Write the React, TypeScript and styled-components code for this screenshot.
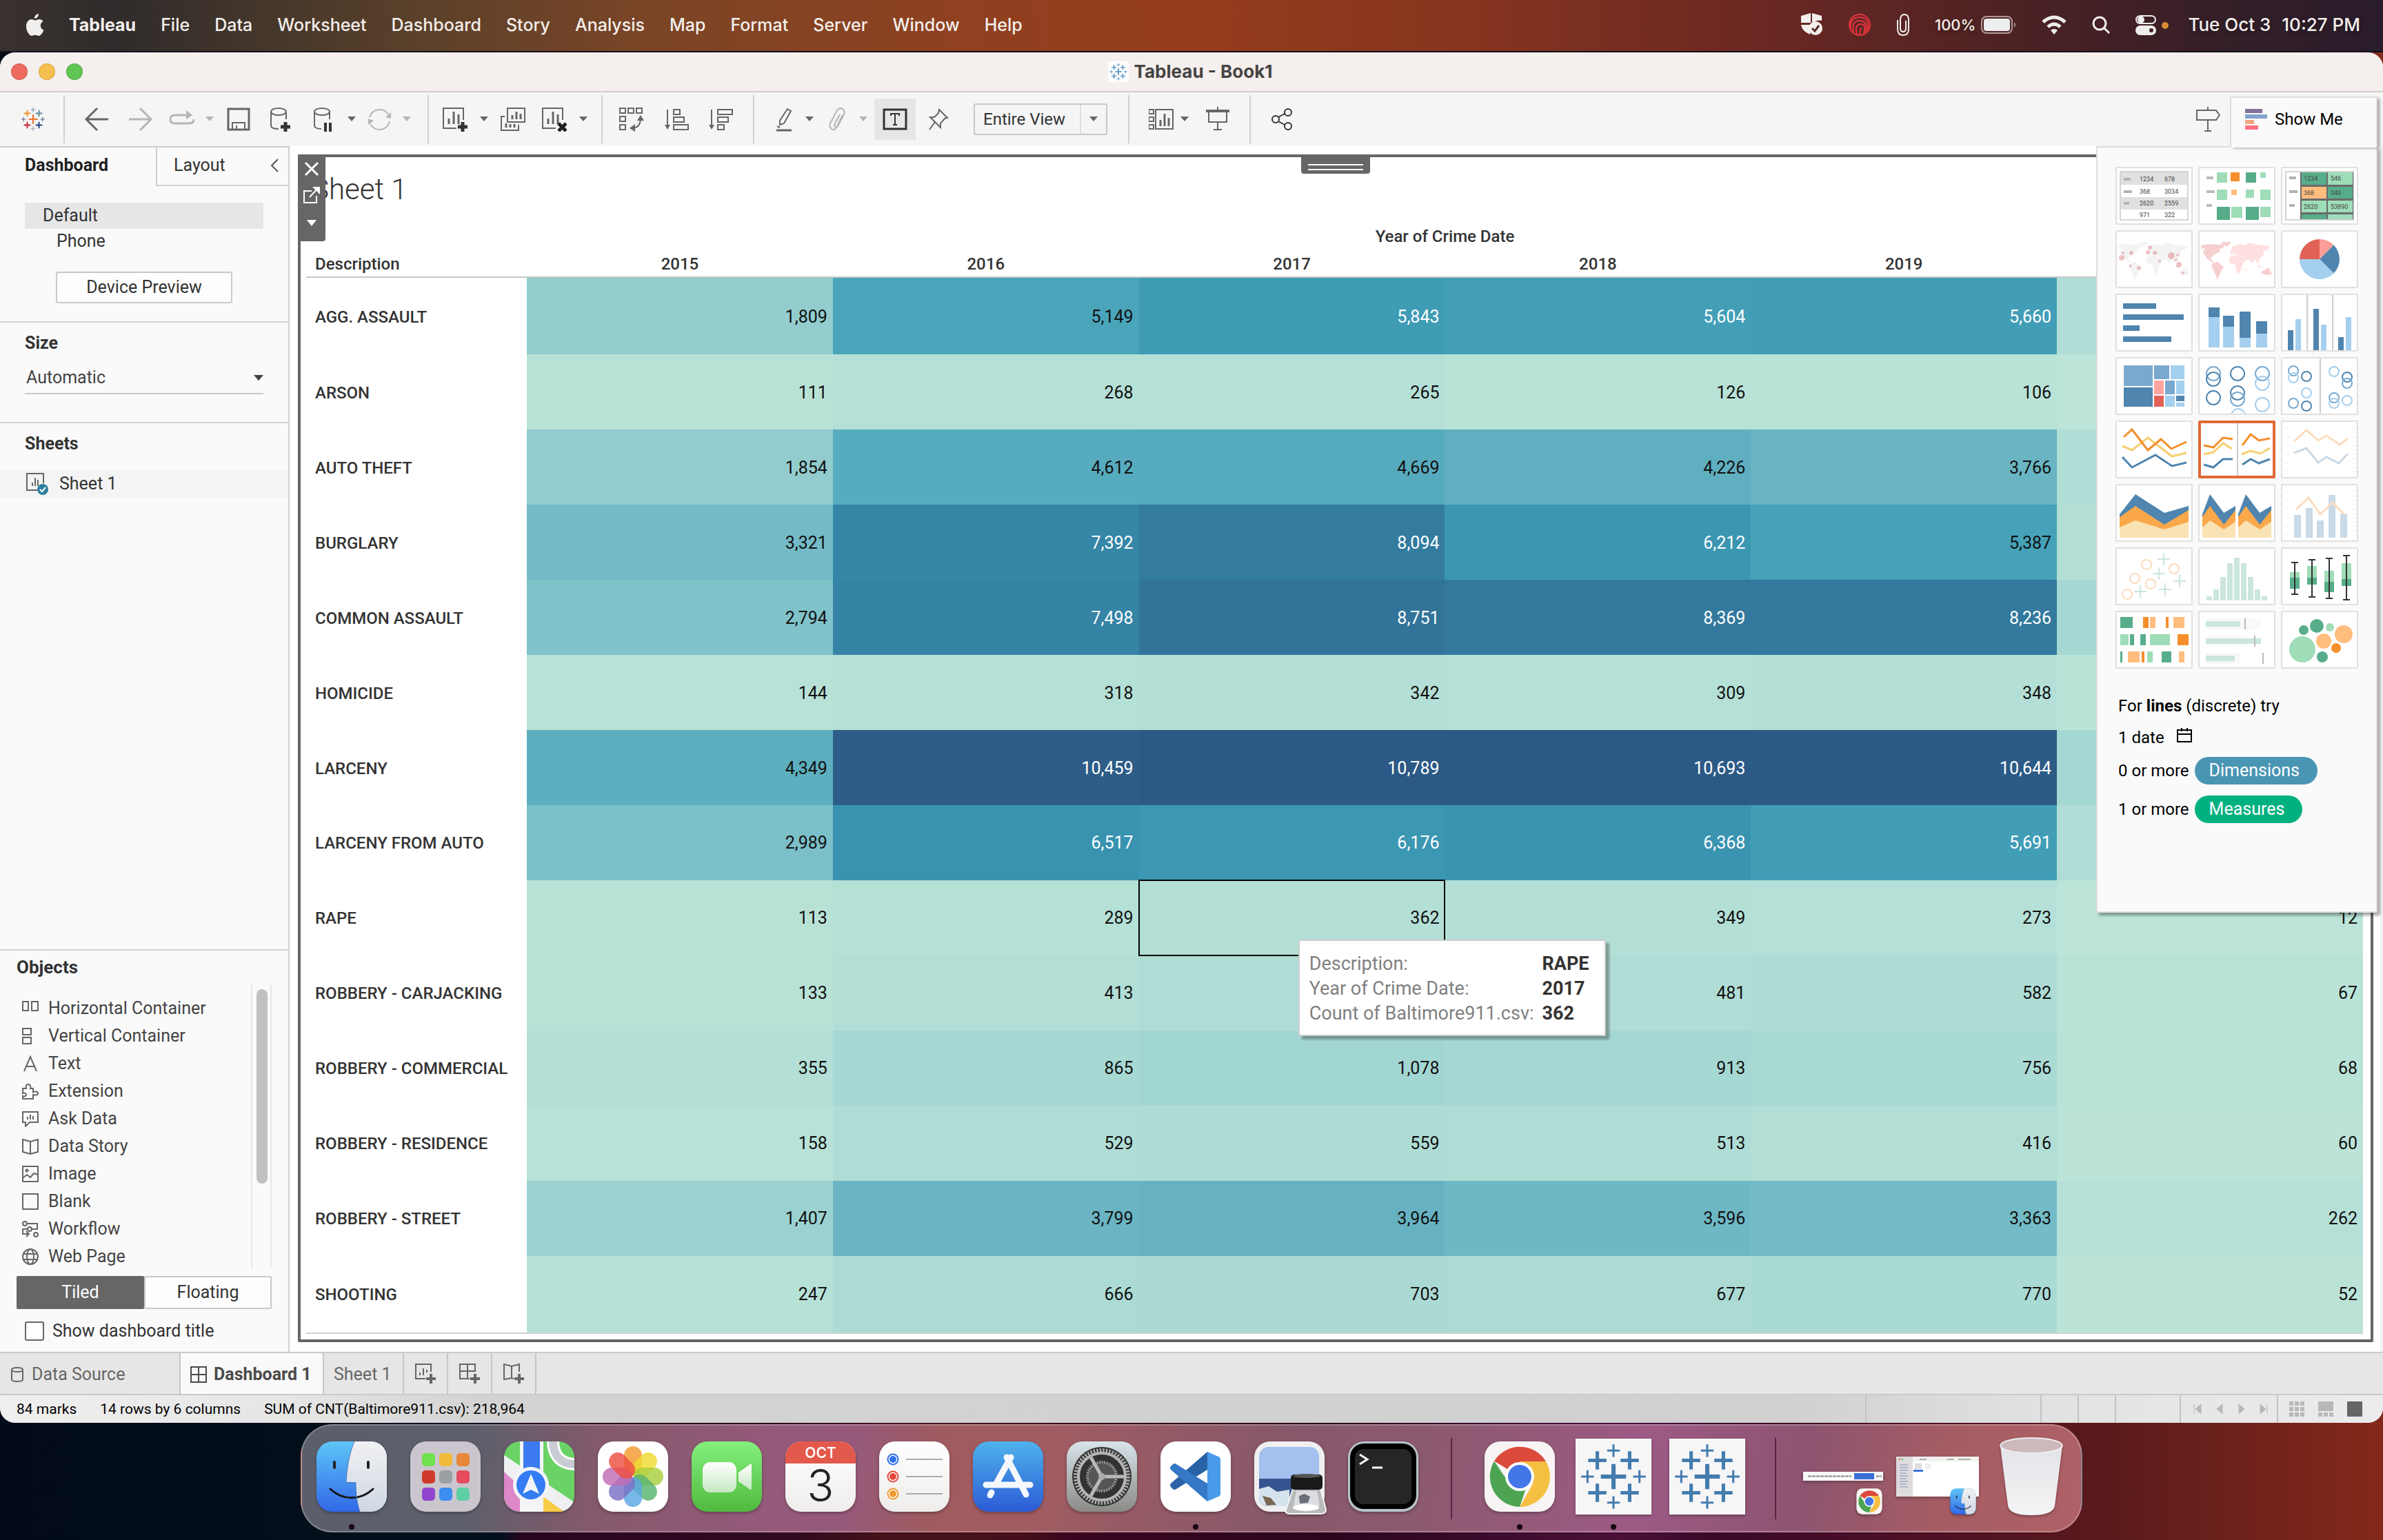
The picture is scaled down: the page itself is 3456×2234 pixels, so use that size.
import React from "react";
import styled, { createGlobalStyle, css } from "styled-components";

const UI = `Roboto, "Liberation Sans", sans-serif`;
const SYS = `Inter, "Liberation Sans", sans-serif`;

const Global = createGlobalStyle`
  *, *::before, *::after { box-sizing: border-box; }
  body { margin: 0; font-family: ${UI}; font-size: 24px; line-height: 32px; color: #333; }
  button, select, input { font: inherit; color: inherit; margin: 0; }
  button { background: none; border: 0; padding: 0; }
  h1, h2, p, ul { margin: 0; padding: 0; }
  ul { list-style: none; }
  svg { display: block; flex: none; }
`;

/* ---------- Desktop ---------- */

const Desktop = styled.div`
  display: flex;
  flex-direction: column;
  min-height: 100vh;
  background: linear-gradient(90deg, #020b17 0, #03111d 21%, #2b0620 22%, #300a20 33%, #45121b 37%, #45101b 43%, #3a0620 45%, #2d061e 56%, #4a1038 68%, #3a0a28 72%, #4c0f26 80%, #581a1c 88%, #84291a 100%);
`;

const MenuBar = styled.nav`
  display: flex;
  align-items: center;
  height: 76px;
  padding: 0 33px 2px 38px;
  font-family: ${SYS};
  font-size: 25px;
  color: #f3efec;
  text-shadow: 0 2px 6px rgba(0, 0, 0, 0.35);
  border-bottom: 2px solid #14101c;
  background: linear-gradient(90deg, #39312f 0, #302c2b 5%, #59402a 17%, #7a4526 27%, #8f4120 40%, #963d1c 50%, #85341f 62%, #6a2822 74%, #4b2224 85%, #331e28 94%, #291c2a 100%);
`;

const MenuItem = styled.button<{ $bold?: boolean }>`
  margin-left: 36px;
  font-weight: ${(p) => (p.$bold ? 700 : 500)};
  white-space: nowrap;
`;

const MenuExtras = styled.div`
  display: flex;
  align-items: center;
  gap: 36px;
  margin-left: auto;
  font-size: 26px;
  font-weight: 500;
  white-space: nowrap;
`;

const Battery = styled.div`
  display: flex;
  align-items: center;
  gap: 8px;
  font-size: 22px;
`;

const Clock = styled.time`
  display: flex;
  gap: 16px;
  margin-left: -8px;
`;

/* ---------- Window ---------- */

const Window = styled.main`
  position: relative;
  display: flex;
  flex: 1;
  flex-direction: column;
  overflow: hidden;
  border-radius: 22px;
  background: #fff;
`;

const TitleBar = styled.header`
  display: flex;
  align-items: center;
  justify-content: center;
  position: relative;
  height: 58px;
  padding: 0 4px 0 0;
  background: #f5efed;
  border-bottom: 2px solid #cfcfcf;
  font-family: ${SYS};
  font-weight: 700;
  color: #464443;
`;

const WindowTitle = styled.h1`
  display: flex;
  align-items: center;
  gap: 8px;
  font-size: 26px;
  line-height: 32px;
`;

const Lights = styled.div`
  position: absolute;
  left: 16px;
  top: 16px;
  display: flex;
  gap: 16px;
`;

const Light = styled.button<{ $color: string }>`
  width: 24px;
  height: 24px;
  border-radius: 50%;
  background: ${(p) => p.$color};
  border: 1px solid rgba(0, 0, 0, 0.12);
`;

const Toolbar = styled.div`
  display: flex;
  height: 78px;
  background: #f5f5f5;
  color: #666;
`;

const ToolGroup = styled.div<{ $start?: number; $end?: number; $plain?: boolean }>`
  display: flex;
  align-items: center;
  height: 70px;
  margin-top: 4px;
  padding: 0 ${(p) => p.$end ?? 28}px 0 ${(p) => p.$start ?? 28}px;
  border-right: ${(p) => (p.$plain ? "0" : "2px solid #d0d0d0")};
`;

const Tool = styled.button<{ $before?: number; $faded?: boolean }>`
  display: flex;
  align-items: center;
  justify-content: center;
  width: 36px;
  height: 60px;
  margin-left: ${(p) => p.$before ?? 0}px;
  color: ${(p) => (p.$faded ? "#b5b5b5" : "#666")};
`;

const LabelTool = styled(Tool)`
  width: 60px;
  margin-left: 10px;
  background: #e6e6e6;
  color: #333;
`;

const CaretButton = styled(Tool)`
  width: 12px;
  margin-left: ${(p) => p.$before ?? 16}px;
`;

const FitBox = styled.div`
  display: flex;
  align-items: center;
  width: 194px;
  height: 46px;
  margin-left: 32px;
  padding-right: 12px;
  border: 2px solid #c8c8c8;
  border-radius: 3px;
`;

const PlainSelect = styled.select`
  flex: 1;
  min-width: 0;
  appearance: none;
  border: 0;
  background: transparent;
  outline: 0;
  padding: 0;
`;

const FitSelect = styled(PlainSelect)`
  height: 42px;
  padding-left: 12px;
  border-right: 2px solid #ddd;
  margin-right: 12px;
  color: #333;
`;

const ToolSpacer = styled.div`
  flex: 1;
`;

const ShowMeTab = styled.button`
  position: relative;
  z-index: 3;
  display: flex;
  align-items: center;
  gap: 11px;
  width: 214px;
  height: 74px;
  margin: 6px 8px 0 14px;
  padding: 0 0 10px 20px;
  background: #fafafa;
  border: 2px solid #dedede;
  border-bottom: 0;
  box-shadow: 4px 2px 4px -1px rgba(0, 0, 0, 0.35);
  color: #000;
`;

const Body = styled.div`
  position: relative;
  display: flex;
  flex: 1;
`;

/* ---------- Sidebar ---------- */

const Sidebar = styled.aside`
  display: flex;
  flex-direction: column;
  flex: none;
  width: 420px;
  background: #fafafa;
  border-top: 2px solid #d0d0d0;
  border-right: 2px solid #d0d0d0;
  font-size: 25px;
`;

const PaneTabs = styled.div`
  display: flex;
  height: 56px;
`;

const PaneTab = styled.button<{ $active?: boolean }>`
  display: flex;
  align-items: center;
  justify-content: space-between;
  ${(p) =>
    p.$active
      ? css`
          width: 226px;
          padding-left: 36px;
          padding-bottom: 4px;
          font-weight: 700;
          color: #222;
        `
      : css`
          flex: 1;
          padding: 0 14px 2px 24px;
          border-left: 2px solid #d0d0d0;
          border-bottom: 2px solid #d0d0d0;
        `}
`;

const Section = styled.section`
  display: flex;
  flex-direction: column;
  padding: 0 36px;
  border-bottom: 2px solid #d0d0d0;
`;

const DeviceSection = styled(Section)`
  padding-top: 24px;
  padding-bottom: 26px;
`;

const Device = styled.button<{ $nested?: boolean }>`
  height: ${(p) => (p.$nested ? 36 : 38)}px;
  padding-left: ${(p) => (p.$nested ? 46 : 26)}px;
  text-align: left;
  background: ${(p) => (p.$nested ? "transparent" : "#e6e6e6")};
`;

const OutlineButton = styled.button`
  align-self: center;
  width: 256px;
  height: 46px;
  margin-top: 26px;
  border: 2px solid #c9c9c9;
  border-radius: 3px;
  background: #fdfdfd;
`;

const Heading = styled.h2`
  font-size: 25px;
  line-height: 32px;
  font-weight: 700;
`;

const SizeSection = styled(Section)`
  padding-top: 14px;
  padding-bottom: 40px;
`;

const SizeField = styled.div`
  display: flex;
  align-items: center;
  height: 46px;
  margin-top: 12px;
  padding-left: 2px;
  border-bottom: 2px solid #c9c9c9;
  color: #444;
`;

const SheetsSection = styled.section`
  flex: 1;
  padding-top: 14px;
  border-bottom: 2px solid #d0d0d0;
  h2 { padding-left: 36px; }
`;

const SheetRow = styled.button`
  display: flex;
  align-items: center;
  gap: 14px;
  width: 100%;
  height: 40px;
  margin-top: 22px;
  padding-left: 38px;
  background: #f4f4f4;
`;

const ObjectsSection = styled.section`
  display: flex;
  flex-direction: column;
  padding: 8px 24px 16px;
`;

const ObjectsHeading = styled(Heading)`
  font-size: 26px;
`;

const ObjectsArea = styled.div`
  display: flex;
  height: 410px;
  margin-top: 10px;
`;

const ObjectList = styled.ul`
  flex: 1;
  padding: 14px 0 0 8px;
`;

const ObjectItem = styled.li`
  display: flex;
  align-items: center;
  gap: 14px;
  height: 40px;
  color: #444;
  svg { color: #666; }
`;

const ScrollTrack = styled.div`
  width: 30px;
  padding: 6px;
  border-left: 2px solid #e6e6e6;
  border-right: 2px solid #e6e6e6;
`;

const ScrollThumb = styled.div`
  width: 16px;
  height: 282px;
  border-radius: 8px;
  background: #c1c1c1;
`;

const Segmented = styled.div`
  display: flex;
  height: 48px;
  margin: 12px 0 18px;
`;

const Segment = styled.button<{ $on?: boolean }>`
  flex: 1;
  border: 2px solid ${(p) => (p.$on ? "#666" : "#c9c9c9")};
  border-radius: 2px;
  background: ${(p) => (p.$on ? "#666" : "#fdfdfd")};
  color: ${(p) => (p.$on ? "#fff" : "#333")};
`;

const CheckLabel = styled.label`
  display: flex;
  align-items: center;
  gap: 12px;
  height: 28px;
  padding-left: 12px;
`;

const CheckBox = styled.input`
  appearance: none;
  width: 28px;
  height: 28px;
  border: 2px solid #666;
  border-radius: 3px;
  background: #fff;
`;

/* ---------- Dashboard canvas ---------- */

const Canvas = styled.div`
  display: flex;
  flex: 1;
  padding: 12px 10px 14px 12px;
  border-right: 4px solid #f3f3f3;
  background: #fff;
`;

const Zone = styled.section`
  position: relative;
  display: flex;
  flex-direction: column;
  flex: 1;
  padding: 0 11px 8px 8px;
  border: 4px solid #666;
  border-radius: 2px;
`;

const SheetTitle = styled.h2`
  height: 94px;
  padding-left: 8px;
  font-size: 42px;
  line-height: 94px;
  font-weight: 300;
`;

const ZoneControls = styled.div`
  position: absolute;
  left: -4px;
  top: -4px;
  display: flex;
  flex-direction: column;
  align-items: center;
  gap: 14px;
  width: 40px;
  height: 126px;
  padding-top: 10px;
  border-radius: 0 0 4px 0;
  background: #666;
  color: #fff;
`;

const ZoneHandle = styled.button`
  position: absolute;
  left: 50%;
  top: -4px;
  width: 100px;
  height: 28px;
  margin-left: -50px;
  padding: 9px 10px 0;
  border-radius: 0 0 4px 4px;
  background: #666;
  &::before {
    content: "";
    display: block;
    height: 9px;
    border-top: 2px solid #fff;
    border-bottom: 2px solid #fff;
  }
`;

const Grid = styled.table`
  flex: 1;
  width: 100%;
  table-layout: fixed;
  border-collapse: collapse;
  border-bottom: 2px solid #d0d0d0;
`;

const LabelCol = styled.col`
  width: 320px;
`;

const HeadRow = styled.tr`
  height: 40px;
`;

const HeadCell = styled.th`
  padding: 2px 0 0;
  font-weight: 500;
  text-align: center;
`;

const RowHead = styled.th`
  padding: 2px 0 0 13px;
  font-weight: 500;
  text-align: left;
  white-space: nowrap;
`;

const GridBody = styled.tbody`
  border-top: 2px solid #c8c8c8;
`;

const Cell = styled.td<{ $bg: string; $light: boolean; $selected: boolean }>`
  position: relative;
  padding: 2px 8px 0 0;
  font-size: 25px;
  text-align: right;
  background: ${(p) => p.$bg};
  color: ${(p) => (p.$light ? "#fff" : "#111")};
  ${(p) =>
    p.$selected &&
    css`
      outline: 2px solid #000;
      outline-offset: -1px;
      z-index: 2;
    `}
`;

const Tooltip = styled.div`
  position: absolute;
  left: 231px;
  top: 86px;
  display: grid;
  grid-template-columns: auto auto;
  column-gap: 12px;
  padding: 15px 22px 13px 14px;
  border: 2px solid #ccc;
  background: #fff;
  box-shadow: 5px 5px 3px rgba(0, 0, 0, 0.3);
  font-size: 27px;
  line-height: 36px;
  text-align: left;
  white-space: nowrap;
  color: #808080;
  strong { font-weight: 700; color: #333; }
`;

/* ---------- Show Me ---------- */

const ShowMePanel = styled.aside`
  position: absolute;
  right: 8px;
  top: 0;
  z-index: 2;
  width: 408px;
  height: 1112px;
  padding: 28px 26px;
  background: #fafafa;
  border: 2px solid #dedede;
  box-shadow: 4px 4px 4px rgba(0, 0, 0, 0.35);
  color: #000;
`;

const ThumbGrid = styled.div`
  display: grid;
  grid-template-columns: repeat(3, 112px);
  gap: 8px;
`;

const Thumb = styled.button<{ $on?: boolean; $faded?: boolean }>`
  height: 84px;
  overflow: hidden;
  border: 2px solid #e0e0e0;
  border-radius: 2px;
  background: #fff;
  ${(p) => p.$on && css`border: 4px solid #df6a35; svg { margin: -2px; }`}
  svg { opacity: ${(p) => (p.$faded ? 0.3 : 1)}; }
`;

const Hint = styled.div`
  display: flex;
  flex-direction: column;
  margin-top: 36px;
  padding-left: 4px;
`;

const HintLine = styled.p<{ $h: number }>`
  display: flex;
  align-items: center;
  gap: 8px;
  height: ${(p) => p.$h}px;
  white-space: pre;
  svg { margin: -6px 0 0 10px; }
`;

const Pill = styled.span<{ $color: string }>`
  padding: 0 26px 0 21px;
  border-radius: 20px;
  line-height: 40px;
  font-size: 25px;
  background: ${(p) => p.$color};
  color: #fff;
`;

/* ---------- Bottom bars ---------- */

const TabStrip = styled.nav`
  display: flex;
  height: 61px;
  border-top: 2px solid #cacaca;
  background: #e6e6e6;
`;

const SheetTab = styled.button<{ $w: number; $on?: boolean }>`
  display: flex;
  align-items: center;
  gap: 10px;
  width: ${(p) => p.$w}px;
  padding: 2px 0 0 14px;
  border-right: 2px solid #c6c6c6;
  font-size: 25px;
  color: ${(p) => (p.$on ? "#4a4a4a" : "#666")};
  font-weight: ${(p) => (p.$on ? 700 : 400)};
  background: ${(p) => (p.$on ? "#f9f9f9" : "transparent")};
  white-space: nowrap;
`;

const NewTab = styled(SheetTab)`
  justify-content: center;
  padding: 0;
`;

const StatusBar = styled.footer`
  display: flex;
  align-items: center;
  height: 42px;
  padding-left: 24px;
  border-top: 2px solid #cacaca;
  background: linear-gradient(90deg, #efefef 0, #e6e6e6 12%, #d3d3d3 20%, #d0d0d0 75%, #e2e2e2 86%, #ececec 100%);
  font-size: 21px;
  color: #000;
`;

const StatusText = styled.span`
  margin-right: 34px;
`;

const StatusCell = styled.div<{ $w: number; $gap?: number }>`
  display: flex;
  align-items: center;
  gap: ${(p) => p.$gap ?? 0}px;
  width: ${(p) => p.$w}px;
  height: 40px;
  padding-left: 16px;
  border-left: 2px solid #c2c2c2;
  color: #b8b8b8;
  &:first-of-type { margin-left: auto; }
`;

const GlyphButton = styled.button<{ $dark?: boolean }>`
  color: ${(p) => (p.$dark ? "#666" : "inherit")};
`;

/* ---------- Dock ---------- */

const DockArea = styled.div`
  display: flex;
  justify-content: center;
  padding: 2px 0 11px;
`;

const DockBar = styled.nav`
  display: flex;
  align-items: center;
  height: 157px;
  padding: 0 4px;
  border: 2px solid rgba(255, 255, 255, 0.25);
  border-radius: 46px;
  background: linear-gradient(100deg, #5b5f6b 0, #5e5f6b 10%, #85596b 17%, #955a7b 27%, #96597a 31%, #9f5b5e 36%, #a05c62 42%, #86586a 55%, #8d5a70 64%, #9d5a85 75%, #8d5470 84%, #a55d63 92%, #b06167 100%);
`;

const DockItem = styled.button<{ $running?: boolean }>`
  position: relative;
  display: flex;
  align-items: center;
  justify-content: center;
  width: 136px;
  height: 153px;
  padding-bottom: 6px;
  svg { filter: drop-shadow(0 2px 2px rgba(0, 0, 0, 0.3)); }
  ${(p) =>
    p.$running &&
    css`
      &::after {
        content: "";
        position: absolute;
        left: 50%;
        bottom: 2px;
        width: 8px;
        height: 8px;
        margin-left: -4px;
        border-radius: 50%;
        background: #160610;
      }
    `}
`;

const DockRule = styled.div`
  width: 2px;
  height: 118px;
  margin: 0 30px;
  background: #5c2343;
`;

/* ---------- Icons ---------- */

type Kids = { children?: React.ReactNode };

const Ico = ({ s = 36, w = 2, children }: Kids & { s?: number; w?: number }) => (
  <svg width={s} height={s} viewBox={`0 0 ${s} ${s}`} fill="none" stroke="currentColor" strokeWidth={w} aria-hidden="true">
    {children}
  </svg>
);

const Caret = ({ size = 12 }: { size?: number }) => (
  <svg width={size} height={size * 0.6} viewBox="0 0 12 7" aria-hidden="true">
    <path d="M0 0h12L6 7z" fill="currentColor" />
  </svg>
);

const plusPath = (x: number, y: number, a: number) => `M${x - a} ${y}h${2 * a}M${x} ${y - a}v${2 * a}`;

const Pluses = ({ c, palette }: { c: number; palette: string[] }) => {
  const k = c / 54;
  const items: [number, number, number, number][] = [
    [0, 0, 18, 6],
    [-23, -23, 13, 5], [23, -23, 13, 5], [-23, 23, 13, 5], [23, 23, 13, 5],
    [0, -37, 9, 3], [0, 37, 9, 3], [-37, 0, 9, 3], [37, 0, 9, 3],
  ];
  return (
    <g fill="none">
      {items.map(([x, y, a, w], i) => (
        <path key={i} d={plusPath(c + x * k, c + y * k, a * k)} stroke={palette[i % palette.length]} strokeWidth={w * k} />
      ))}
    </g>
  );
};

const TableauMark = () => (
  <svg width="40" height="40" viewBox="0 0 36 36" aria-hidden="true">
    <Pluses c={18} palette={["#e8762d", "#eb912c", "#59879b", "#c72035", "#1f447e", "#7199a6", "#9b9fb5", "#5b6591", "#5b6591"]} />
  </svg>
);

const Bars = () => <path d="M9 25v-8M16 25V7M23 25V11" strokeWidth="3" />;

const AppleLogo = () => (
  <svg width="26" height="32" viewBox="0 0 26 32" fill="#f0efee" aria-hidden="true">
    <path d="M18 0c.3 3.600-2.500 7-6 7C11.600 3.700 14.600.3 18 0zM24.500 11c-2.600 1.600-3.800 3.700-3.700 6.200 0 3 1.800 5.300 4.600 6.300C24 27.500 21 32 18 32c-2 0-2.800-1.200-5-1.200S10 32 8.200 32C4.200 32 0 24.500 0 18c0-6 3.600-10 7.800-10 2.200 0 4 1.400 5.400 1.400C14.500 9.400 16.500 8 19 8c2.200 0 4.200 1.200 5.500 3z" />
  </svg>
);

const CalendarIcon = () => (
  <Ico s={22}><path d="M1 3h20v17H1zM1 9h20M7 0v5M15 0v5" /></Ico>
);

/* ---------- Show Me thumbnails ---------- */

const B = "#4f85af", L = "#a5cfef", M = "#7aa9cf", G = "#57ad8a", LG = "#9fdcb8", O = "#f58e2b", LO = "#ffbd7e", Y = "#f6cf71", R = "#e16157", P = "#ff9d98";

type RectSpec = [number, number, number, number, string];
const Rects = ({ d }: { d: RectSpec[] }) => (
  <>{d.map(([x, y, w, h, f], i) => <rect key={i} x={x} y={y} width={w} height={h} fill={f} />)}</>
);

type RingSpec = [number, number, string];
const Rings = ({ d, r }: { d: RingSpec[]; r: number }) => (
  <>{d.map(([x, y, s], i) => <circle key={i} cx={x} cy={y} r={r} fill="none" stroke={s} strokeWidth="2" />)}</>
);

const Numbers = ({ d }: { d: [number, number, string][] }) => (
  <g fontSize="9" fill="#444" fontFamily={UI}>
    {d.map(([x, y, t], i) => <text key={i} x={x} y={y}>{t}</text>)}
  </g>
);

const americas = "M2 20L12 18L28 19L36 17L34 24L28 25L30 29L24 32L18 36L16 40L20 44L18 45L10 38L5 30L8 24L3 25ZM32 15L46 15L40 22L36 20ZM18 46L26 44L35 51L30 60L26 70L23 62L18 52Z";
const oldWorld = "M46 26L48 21L58 18L66 20L72 16L84 19L103 21L98 27L92 28L93 34L86 40L86 46L82 44L80 40L76 46L72 40L66 42L62 36L54 34L50 31L46 34L44 31ZM44 36L52 34L62 37L66 42L63 46L60 56L56 62L54 60L52 48L44 46L42 40ZM65 54L67 52L66 58ZM84 48L92 52L86 52Z";
const oceania = "M90 58L100 52L105 62L98 63L90 61Z";

const area = (x: number, w: number) => {
  const X = (f: number) => x + w * f;
  return (
    <>
      <path d={`M${X(0)} 42L${X(0.23)} 13L${X(0.65)} 40L${X(1)} 30V76H${X(0)}Z`} fill={B} />
      <path d={`M${X(0)} 46L${X(0.23)} 30L${X(0.65)} 57L${X(1)} 36V76H${X(0)}Z`} fill="#faa84a" />
      <path d={`M${X(0)} 61L${X(0.23)} 51L${X(0.65)} 64L${X(1)} 53V76H${X(0)}Z`} fill="#f9e2b4" />
    </>
  );
};

const ticks = <path d="M4 9h6M4 22h6M4 34h6M4 47h6M4 60h6M4 72h6M102 9h6M102 16h6M102 22h6M102 28h6M102 35h6M102 41h6M102 47h6M102 53h6M102 60h6M102 66h6M102 72h6" stroke="#ddd" strokeWidth="2" />;

type ThumbSpec = { name: string; on?: boolean; faded?: boolean; art: React.ReactNode };

const thumbs: ThumbSpec[] = [
  { name: "Text table", art: <>
    <rect x="5" y="5" width="98" height="70" fill="none" stroke="#aaa" />
    <Rects d={[[6, 6, 96, 18, "#e0e0e0"], [6, 42, 96, 18, "#e0e0e0"], [10, 14, 10, 4, "#b3b3b3"], [10, 32, 12, 4, "#b3b3b3"], [10, 49, 8, 4, "#b3b3b3"]]} />
    <Numbers d={[[33, 19, "1234"], [69, 19, "678"], [33, 37, "368"], [69, 37, "3034"], [33, 54, "2620"], [69, 54, "2559"], [33, 71, "971"], [69, 71, "322"]]} />
  </> },
  { name: "Heat map", art: <Rects d={[[10, 12, 10, 4, "#bbb"], [10, 32, 12, 4, "#bbb"], [10, 52, 8, 4, "#bbb"], [25, 6, 15, 15, LG], [45, 6, 13, 13, O], [67, 6, 15, 15, G], [88, 6, 8, 8, LG], [25, 31, 15, 15, LG], [46, 31, 8, 8, LO], [67, 31, 12, 12, LG], [88, 31, 15, 15, LG], [25, 56, 19, 19, G], [46, 56, 16, 16, LG], [67, 56, 19, 19, G], [88, 56, 15, 15, LG]]} /> },
  { name: "Highlight table", art: <>
    <rect x="5" y="5" width="98" height="70" fill="none" stroke="#aaa" />
    <Rects d={[[26, 6, 77, 68, "#6a6a6a"], [28, 6, 36, 18, G], [66, 6, 36, 18, LG], [28, 27, 36, 17, LO], [66, 27, 36, 17, G], [28, 47, 36, 17, LG], [66, 47, 36, 17, LG], [28, 67, 36, 7, G], [66, 67, 36, 7, LG], [10, 12, 10, 4, "#b3b3b3"], [10, 32, 12, 4, "#b3b3b3"], [10, 52, 8, 4, "#b3b3b3"]]} />
    <Numbers d={[[31, 18, "1234"], [70, 18, "546"], [31, 39, "368"], [70, 39, "340"], [31, 59, "2620"], [70, 59, "53890"]]} />
  </> },
  { name: "Symbol map", art: <>
    <path d={americas + oldWorld + oceania} fill="#f3f3f3" />
    <g fill="#d9707a" opacity=".42">
      {[[7, 38, 4], [9, 31, 2], [21, 31, 3], [48, 23, 3], [45, 30, 3], [55, 31, 3], [79, 35, 5], [88, 34, 2], [86, 41, 2], [90, 48, 4], [62, 43, 2], [20, 50, 2], [32, 53, 3], [96, 60, 2]].map(([x, y, r], i) => <circle key={i} cx={x} cy={y} r={r} />)}
    </g>
  </> },
  { name: "Map", art: <><path d={americas + oceania} fill="#f6cfcf" /><path d={oldWorld} fill="#ffe0e0" /></> },
  { name: "Pie chart", art: <>
    <path d="M54 40V11A29 29 0 0 0 25 40Z" fill={R} /><path d="M54 40V11A29 29 0 0 1 74.500 19.500Z" fill={P} />
    <path d="M54 40L74.500 19.500A29 29 0 0 1 74.500 60.500Z" fill={B} /><path d="M54 40L74.500 60.500A29 29 0 0 1 25 40Z" fill={L} />
  </> },
  { name: "Horizontal bars", art: <Rects d={[[9, 12, 48, 8, B], [9, 28, 88, 8, B], [9, 44, 24, 8, B], [9, 60, 70, 8, B]]} /> },
  { name: "Stacked bars", art: <Rects d={[[13, 18, 16, 14, B], [13, 32, 16, 44, L], [34, 30, 16, 16, B], [34, 46, 16, 30, L], [58, 24, 16, 38, B], [58, 62, 16, 14, L], [82, 38, 16, 18, B], [82, 56, 16, 20, L]]} /> },
  { name: "Side-by-side bars", art: <Rects d={[[35, 0, 2, 80, "#ccc"], [72, 0, 2, 80, "#ccc"], [8, 51, 8, 29, B], [19, 35, 8, 45, L], [45, 20, 8, 60, B], [56, 43, 8, 37, L], [81, 61, 8, 19, B], [92, 32, 8, 48, L]]} /> },
  { name: "Treemap", art: <Rects d={[[10, 10, 42, 30, M], [10, 42, 42, 28, B], [54, 10, 22, 20, M], [78, 10, 20, 20, L], [54, 32, 14, 20, "#ffa59f"], [70, 32, 14, 20, M], [86, 32, 12, 20, L], [54, 54, 14, 16, R], [70, 54, 14, 16, L], [86, 54, 12, 8, B], [86, 64, 12, 6, L]]} /> },
  { name: "Circle views", art: <Rings r={10} d={[[20, 22, M], [20, 30, B], [20, 57, B], [55, 22, B], [55, 50, B], [55, 59, M], [56, 83, L], [91, 22, M], [91, 36, L], [91, 67, L]]} /> },
  { name: "Side-by-side circles", art: <><rect x="54" width="2" height="80" fill="#ccc" /><Rings r={7} d={[[16, 18, M], [16, 28, L], [35, 26, B], [35, 50, L], [16, 65, M], [35, 69, B], [75, 19, L], [94, 27, B], [94, 36, M], [75, 57, M], [75, 65, L], [94, 61, L]]} /></> },
  { name: "Lines (continuous)", art: <g fill="none" strokeWidth="3">
    <path d="M8 35L22 41L45 23L80 50L101 45" stroke={Y} /><path d="M10 22L22 11L45 41L64 25L79 39L101 29" stroke={O} /><path d="M8 51L22 66L56 48L80 64L101 59" stroke={B} />
  </g> },
  { name: "Lines (discrete)", on: true, art: <>
    <rect x="54" width="2" height="80" fill="#ccc" />
    <g fill="none" strokeWidth="3">
      <path d="M6 34L20 37L34 23L48 25M62 34L74 18L86 27L102 24" stroke={O} /><path d="M6 47L20 44L34 31L47 39M61 47L74 42L88 46L102 38" stroke={Y} /><path d="M6 62L20 66L34 54H48M62 62L74 54L86 60L102 54" stroke={B} />
    </g>
  </> },
  { name: "Dual lines", faded: true, art: <>{ticks}<g fill="none" strokeWidth="3"><path d="M17 28L35 12L52 27L64 20L83 33L95 24" stroke={O} /><path d="M17 45L35 38L52 59L64 51L82 60L95 46" stroke={B} /></g></> },
  { name: "Area (continuous)", art: area(4, 100) },
  { name: "Area (discrete)", art: <>{area(4, 48)}{area(56, 48)}</> },
  { name: "Dual combination", faded: true, art: <>{ticks}<Rects d={[[17, 43, 10, 33, B], [34, 33, 10, 43, B], [50, 51, 10, 25, B], [67, 14, 10, 62, B], [84, 41, 10, 35, B]]} /><path d="M20 35L38 18L55 42L73 25L91 43" fill="none" stroke={O} strokeWidth="3" /></> },
  { name: "Scatter plot", faded: true, art: <>
    <Rings r={7} d={[[43, 23, O], [83, 29, O], [26, 43, O], [49, 51, O], [15, 66, O]]} />
    <path d={plusPath(68, 15, 9) + plusPath(61, 36, 9) + plusPath(91, 47, 9) + plusPath(70, 59, 9) + plusPath(34, 62, 9)} stroke={G} strokeWidth="2" />
  </> },
  { name: "Histogram", faded: true, art: <Rects d={[[10, 69, 8, 6, G], [20, 59, 8, 16, G], [30, 41, 8, 34, G], [40, 21, 8, 54, G], [50, 13, 8, 62, G], [60, 21, 8, 54, G], [70, 41, 8, 34, G], [80, 59, 8, 16, G], [90, 69, 8, 6, G]]} /> },
  { name: "Box-and-whisker plot", art: <>
    <Rects d={[[11, 34, 14, 8, LG], [11, 42, 14, 16, G], [36, 25, 14, 17, LG], [36, 42, 14, 10, G], [61, 32, 14, 16, LG], [61, 48, 14, 15, G], [86, 21, 14, 23, LG], [86, 44, 14, 10, G]]} />
    <path d="M18 20v46M13 20h10M13 66h10M43 16v54M38 16h10M38 70h10M68 14v58M63 14h10M63 72h10M93 10v64M88 10h10M88 74h10" stroke="#333" strokeWidth="2" />
  </> },
  { name: "Gantt chart", art: <Rects d={[[5, 7, 18, 16, G], [38, 7, 8, 16, O], [48, 7, 8, 16, LO], [71, 7, 4, 16, O], [82, 7, 16, 16, LO], [5, 32, 12, 16, LG], [19, 32, 6, 16, G], [34, 32, 8, 16, G], [48, 32, 29, 16, LG], [88, 32, 16, 16, O], [5, 57, 3, 16, G], [16, 57, 17, 16, LO], [36, 57, 4, 16, O], [44, 57, 8, 16, LG], [65, 57, 14, 16, G], [90, 57, 8, 16, LO]]} /> },
  { name: "Bullet graph", faded: true, art: <Rects d={[[9, 9, 80, 16, "#ededed"], [9, 34, 58, 16, "#ededed"], [9, 59, 50, 16, "#ededed"], [9, 13, 50, 8, G], [9, 38, 80, 8, G], [9, 63, 42, 8, G], [65, 9, 2, 16, "#222"], [79, 34, 2, 16, "#222"], [91, 59, 2, 16, "#222"]]} /> },
  { name: "Packed bubbles", art: <>
    {([[29, 54, 19, LG], [31, 26, 7, G], [50, 20, 10, G], [69, 22, 6, LG], [60, 42, 11, LO], [89, 32, 13, LO], [78, 52, 7, O], [58, 65, 8, G]] as [number, number, number, string][]).map(([x, y, r, f], i) => <circle key={i} cx={x} cy={y} r={r} fill={f} />)}
  </> },
];

/* ---------- Data ---------- */

const ramp = ["#bce4d8", "#aedcd5", "#a1d5d2", "#95cecf", "#89c8cc", "#7ec1ca", "#72bac6", "#66b2c2", "#59acbe", "#4ba5ba", "#419eb6", "#3b96b2", "#358ead", "#3586a7", "#347ea1", "#32779b", "#316f96", "#2f6790", "#2d608a", "#2c5985"];

const channel = (hex: string, i: number) => parseInt(hex.slice(1 + i * 2, 3 + i * 2), 16);

function heat(value: number) {
  const t = (value / 10789) * (ramp.length - 1);
  const lo = Math.min(Math.floor(t), ramp.length - 2);
  const rgb = [0, 1, 2].map((i) => Math.round(channel(ramp[lo], i) + (channel(ramp[lo + 1], i) - channel(ramp[lo], i)) * (t - lo)));
  return `rgb(${rgb.join(",")})`;
}

const years = ["2015", "2016", "2017", "2018", "2019"];

const crimes: [string, number[], boolean?][] = [
  ["AGG. ASSAULT", [1809, 5149, 5843, 5604, 5660, 500], true],
  ["ARSON", [111, 268, 265, 126, 106, 20], true],
  ["AUTO THEFT", [1854, 4612, 4669, 4226, 3766, 480], true],
  ["BURGLARY", [3321, 7392, 8094, 6212, 5387, 400], true],
  ["COMMON ASSAULT", [2794, 7498, 8751, 8369, 8236, 900], true],
  ["HOMICIDE", [144, 318, 342, 309, 348, 30], true],
  ["LARCENY", [4349, 10459, 10789, 10693, 10644, 900], true],
  ["LARCENY FROM AUTO", [2989, 6517, 6176, 6368, 5691, 480], true],
  ["RAPE", [113, 289, 362, 349, 273, 12]],
  ["ROBBERY - CARJACKING", [133, 413, 520, 481, 582, 67]],
  ["ROBBERY - COMMERCIAL", [355, 865, 1078, 913, 756, 68]],
  ["ROBBERY - RESIDENCE", [158, 529, 559, 513, 416, 60]],
  ["ROBBERY - STREET", [1407, 3799, 3964, 3596, 3363, 262]],
  ["SHOOTING", [247, 666, 703, 677, 770, 52]],
];

const objects: [string, React.ReactNode][] = [
  ["Horizontal Container", <path d="M1 2h8v13H1zM14 2h9v13h-9z" />],
  ["Vertical Container", <path d="M1 1h12v9H1zM1 14h12v9H1z" />],
  ["Text", <path d="M3 23L12 2L21 23M6 16h12" />],
  ["Extension", <path d="M1 8h5c-1-3 0-6 3-6s4 3 3 6h4v5c3-1 7-1 7 2s-4 3-7 2v6H1v-4c3 1 5 0 5-2s-2-3-5-2z" />],
  ["Ask Data", <path d="M1 2h22v15H11l-6 6v-6H1zM8 13V9M12 13V6M16 13V8" />],
  ["Data Story", <path d="M1 2l11 3 11-3v18l-11 3-11-3zM12 5v18" />],
  ["Image", <><path d="M1 1h22v22H1zM1 18l6-5 5 4 5-6 6 2" /><circle cx="7" cy="7" r="1.500" /></>],
  ["Blank", <path d="M1 1h22v22H1z" />],
  ["Workflow", <><circle cx="4" cy="4" r="3" /><circle cx="11" cy="12" r="3" /><circle cx="20" cy="20" r="3" /><path d="M7 4h15v8h-8M8 12H1v7h7M6 15l4 4-4 4" /></>],
  ["Web Page", <><circle cx="12" cy="12" r="11" /><ellipse cx="12" cy="12" rx="5" ry="11" /><path d="M2 8h20M2 16h20" /></>],
];

/* ---------- Dock artwork ---------- */

const AppIcon = ({ children, fill, size = 104 }: Kids & { fill: string; size?: number }) => (
  <svg width={size} height={size} viewBox="0 0 104 104" aria-hidden="true">
    <rect x="1" y="1" width="102" height="102" rx="23" fill={fill} />
    {children}
  </svg>
);

const Gradient = ({ id, a, b }: { id: string; a: string; b: string }) => (
  <linearGradient id={id} x1="0" y1="0" x2="0" y2="1"><stop stopColor={a} /><stop offset="1" stopColor={b} /></linearGradient>
);

const HiddenDefs = styled.svg`
  position: absolute;
`;

const Defs = () => (
  <HiddenDefs width="0" height="0" aria-hidden="true">
    <defs>
      <Gradient id="blue" a="#5ec5f7" b="#3168e8" />
      <Gradient id="paper" a="#fff" b="#eeedeb" />
      <Gradient id="face" a="#f1f1f3" b="#cfd7e2" />
      <Gradient id="green" a="#84f07c" b="#50b93f" />
      <Gradient id="steel" a="#d8e4ea" b="#8b8a87" />
      <Gradient id="store" a="#4fb2ec" b="#2b5bd6" />
      <Gradient id="camera" a="#fff" b="#c5e8c1" />
      <Gradient id="bin" a="#e4e4e8" b="#f4f4f6" />
      <clipPath id="tile"><rect x="1" y="1" width="102" height="102" rx="23" /></clipPath>
    </defs>
  </HiddenDefs>
);

const Finder = ({ size }: { size?: number }) => (
  <AppIcon fill="url(#blue)" size={size}>
    <g clipPath="url(#tile)">
      <path d="M56 0C48 20 45 40 44 60h14c0 18 2 32 6 44h40V0z" fill="url(#face)" />
      <path d="M27 31v8M76 31v8" stroke="#222" strokeWidth="4" strokeLinecap="round" />
      <path d="M21 70c18 17 44 17 62 0" fill="none" stroke="#151515" strokeWidth="3" strokeLinecap="round" />
      <path d="M56 1C48 20 45 40 44 61h14c0 17 2 30 6 42" fill="none" stroke="#4a79b5" strokeWidth="1" />
    </g>
  </AppIcon>
);

const Launchpad = () => (
  <AppIcon fill="#cbc6cd">
    {["#6fe04e", "#f0b93a", "#e8873a", "#cf3a2c", "#9aa0a3", "#e84a5f", "#9145cf", "#3b8df0", "#5fcfa5"].map((c, i) => (
      <rect key={i} x={18 + (i % 3) * 25} y={18 + Math.floor(i / 3) * 25} width="19" height="19" rx="5" fill={c} />
    ))}
  </AppIcon>
);

const Maps = () => (
  <AppIcon fill="#6bd266">
    <g clipPath="url(#tile)">
      <path d="M0 20L104 90v20H55V60L0 104z" fill="#eef0f2" />
      <path d="M0 44l24 22v40H0z" fill="#dd86c8" />
      <path d="M56 80l34 24H56z" fill="#f7cb45" />
      <path d="M24 0h34v104H24z" fill="#f4f5f6" />
      <path d="M29 0h24v46H29z" fill="#3c7cf0" />
      <path d="M72 0c0 22 12 34 32 34" fill="none" stroke="#fff" strokeWidth="18" />
      <path d="M72 0c0 22 12 34 32 34" fill="none" stroke="#c9ccd2" strokeWidth="12" />
      <circle cx="40" cy="64" r="26" fill="#f2f4f7" /><circle cx="40" cy="64" r="21" fill="#347cf3" />
      <path d="M40 48L52 77L40 71L28 77z" fill="#f2f4f7" />
    </g>
  </AppIcon>
);

const Photos = () => (
  <AppIcon fill="#fff">
    {["#f39a2e", "#efdb2f", "#a9cf3f", "#57b56e", "#5ba7e3", "#7a70c4", "#bf6cb5", "#ee4f43"].map((c, i) => (
      <rect key={i} x="39" y="8" width="26" height="43" rx="13" fill={c} opacity=".82" transform={`rotate(${i * 45} 52 52)`} />
    ))}
  </AppIcon>
);

const FaceTime = () => (
  <AppIcon fill="url(#green)">
    <rect x="17" y="31" width="49" height="44" rx="11" fill="url(#camera)" />
    <path d="M69 46l17-12q2-1 2 1v34q0 3-2 2L69 59z" fill="url(#camera)" />
  </AppIcon>
);

const CalendarApp = () => (
  <AppIcon fill="url(#paper)">
    <g clipPath="url(#tile)"><rect width="104" height="33" fill="#e3594c" /></g>
    <g textAnchor="middle" fontFamily={SYS}>
      <text x="52" y="25" fontSize="21" fontWeight="600" fill="#fff">OCT</text>
      <text x="52" y="88" fontSize="64" fontWeight="300" fill="#222">3</text>
    </g>
  </AppIcon>
);

const Reminders = () => (
  <AppIcon fill="url(#paper)">
    {["#2f72ea", "#e5483a", "#ee9a2f"].map((c, i) => (
      <g key={c}>
        <circle cx="21" cy={27 + i * 25} r="7.500" fill="#fff" stroke={c} strokeWidth="2" /><circle cx="21" cy={27 + i * 25} r="5" fill={c} />
        <path d={`M40 ${27 + i * 25}h53`} stroke="#aaacb0" strokeWidth="2" />
      </g>
    ))}
  </AppIcon>
);

const AppStore = () => (
  <AppIcon fill="url(#store)">
    <g stroke="#f4f8fd" strokeWidth="9" strokeLinecap="round">
      <path d="M56 24L36 60M50 24L78 78M20 64H84M28 75L26 79" />
    </g>
  </AppIcon>
);

const Settings = () => (
  <AppIcon fill="url(#steel)">
    <circle cx="52" cy="52" r="43" fill="#333" />
    <circle cx="52" cy="52" r="38" fill="none" stroke="#a9a9a9" strokeWidth="6" strokeDasharray="2.500 2" />
    <circle cx="52" cy="52" r="34" fill="none" stroke="#b5b5b5" strokeWidth="4" />
    <circle cx="52" cy="52" r="21" fill="#555" stroke="#999" strokeWidth="4" strokeDasharray="2 1.500" />
    <path d="M52 52h33M52 52L36 24M52 52L36 80" stroke="#b9b9b9" strokeWidth="5" />
    <circle cx="52" cy="52" r="5" fill="#aaa" />
  </AppIcon>
);

const VSCode = () => (
  <AppIcon fill="#fff">
    <path d="M69 16v26L24 70q-3 2-5 0l-3-3q-2-3 0-5z" fill="#2962a5" />
    <path d="M69 88V62L24 34q-3-2-5 0l-3 3q-2 3 0 5z" fill="#3478c6" />
    <path d="M69 16l16 7q3 1 3 4v50q0 3-3 4l-16 7z" fill="#4a9aea" />
  </AppIcon>
);

const Preview = () => (
  <svg width="112" height="112" viewBox="0 0 112 112" aria-hidden="true">
    <rect x="5" y="5" width="102" height="102" rx="23" fill="#efeff0" />
    <rect x="12" y="13" width="87" height="86" rx="14" fill="#a3c0ee" />
    <path d="M12 59h87v26q0 14-14 14H26q-14 0-14-14z" fill="#36548f" />
    <path d="M12 74l14-4 12 8 18-3v24H26q-14 0-14-14z" fill="#d5e3ee" /><path d="M17 84l12 3 8 10-14 1z" fill="#7a6653" />
    <path d="M61 74h40l8 30q0 6-8 6H57q-8 0-6-6z" fill="#b9babc" stroke="#f6f6f6" strokeWidth="2" />
    <path d="M66 77h30l4 22H62z" fill="#dcdde0" /><path d="M70 84l8-3 8 4-3 9-12 1z" fill="#6b7078" /><ellipse cx="80" cy="101" rx="19" ry="5" fill="#fff" />
    <rect x="58" y="53" width="46" height="22" rx="5" fill="#191919" /><ellipse cx="81" cy="55" rx="20" ry="3" fill="#555" />
  </svg>
);

const Terminal = () => (
  <AppIcon fill="#b8c4c8">
    <rect x="4" y="4" width="96" height="95" rx="20" fill="#000" /><rect x="11" y="12" width="82" height="80" rx="12" fill="#262626" />
    <path d="M18 20l11 7-11 7M36 39h15" fill="none" stroke="#fff" strokeWidth="3" />
  </AppIcon>
);

const Chrome = ({ size }: { size?: number }) => (
  <AppIcon fill="#f8f4f4" size={size}>
    <path d="M52 52L15 29.500A44 44 0 0 1 90 30z" fill="#dc4a3c" />
    <path d="M52 52H30L15 29.500A44 44 0 0 0 52 96L64 60z" fill="#4ca452" />
    <path d="M52 30H90A44 44 0 0 1 52 96L71 63z" fill="#f5bf41" />
    <circle cx="52" cy="52" r="21" fill="#fff" /><circle cx="52" cy="52" r="17" fill="#4377e8" />
  </AppIcon>
);

const TableauApp = () => (
  <svg width="110" height="110" viewBox="0 0 108 108" aria-hidden="true">
    <rect width="108" height="108" fill="#f6f6f7" stroke="#fff" strokeWidth="2" />
    <Pluses c={54} palette={["#447cae"]} />
  </svg>
);

const SharingMini = () => (
  <svg width="118" height="110" viewBox="0 0 118 110" aria-hidden="true">
    <rect y="48" width="116" height="13" fill="#f8f8f8" /><rect x="74" y="50" width="29" height="9" fill="#3a6fd8" />
    <path d="M7 54.500h63M106 54.500h8" stroke="#888" strokeWidth="2" strokeDasharray="5 1" />
    <g transform="translate(77 72)"><Chrome size={38} /></g>
  </svg>
);

const FinderMini = () => (
  <svg width="120" height="110" viewBox="0 0 120 110" aria-hidden="true">
    <rect y="26" width="120" height="58" fill="#fff" /><rect y="26" width="24" height="58" fill="#dedbde" /><rect x="24" y="26" width="96" height="7" fill="#f4f1f0" />
    <path d="M4 30h2" stroke="#e5534b" strokeWidth="2" /><path d="M8 30h2" stroke="#5ac24d" strokeWidth="2" />
    <path d="M5 38h12M5 42h12M5 46h12M5 50h10M5 54h12M5 58h10M5 62h12M5 66h10M5 70h12" stroke="#7f93b8" strokeWidth="1" />
    <path d="M74 30h10M90 30h18M34 30h10" stroke="#999" strokeWidth="1.500" />
    <rect x="27" y="36" width="10" height="8" fill="#ddd" /><rect x="42" y="36" width="8" height="8" fill="#eee" /><rect x="25" y="45" width="14" height="3" fill="#3a6fd8" />
    <g transform="translate(78 72)"><Finder size={38} /></g>
  </svg>
);

const Trash = () => (
  <svg width="94" height="116" viewBox="0 0 94 116" aria-hidden="true">
    <path d="M2 13L13 100q2 14 34 14t34-14L92 13z" fill="url(#bin)" />
    <ellipse cx="47" cy="13" rx="45" ry="11" fill="#cdb8bc" stroke="#ededf0" strokeWidth="2" />
  </svg>
);

/* ---------- Composition ---------- */

const menus = ["File", "Data", "Worksheet", "Dashboard", "Story", "Analysis", "Map", "Format", "Server", "Window", "Help"];

const AppToolbar = () => (
  <Toolbar>
    <ToolGroup $start={30} $end={26}><Tool aria-label="Start page"><TableauMark /></Tool></ToolGroup>
    <ToolGroup $end={24}>
      <Tool aria-label="Undo"><Ico w={3}><path d="M35 18H3M19 2L3 18l16 16" /></Ico></Tool>
      <Tool aria-label="Redo" $before={28} $faded><Ico w={3}><path d="M1 18h32M17 2l16 16-16 16" /></Ico></Tool>
      <Tool aria-label="Replay" $before={24} $faded><Ico w={3}><path d="M27 12H8q-7 0-7 6t7 6h20q7 0 7-6" /><path d="M24 5l9 7-9 6z" fill="currentColor" stroke="none" /></Ico></Tool>
      <CaretButton aria-label="Replay options" $faded><Caret /></CaretButton>
      <Tool aria-label="Save" $before={18}><Ico w={3}><path d="M3 3h30v30H3z" /><path d="M9 33V23h18v10M15 33v-6" strokeWidth="2" /></Ico></Tool>
      <Tool aria-label="New data source" $before={28}><Ico><ellipse cx="12" cy="7" rx="11" ry="5" /><path d="M1 7v20c0 3 4 5 11 5M23 7v11" /><path d="M15 29h14M22 22v14" stroke="#333" strokeWidth="5" /></Ico></Tool>
      <Tool aria-label="Pause updates" $before={24}><Ico><ellipse cx="15" cy="7" rx="11" ry="5" /><path d="M4 7v20c0 3 4 5 10 5M26 7v11" /><path d="M20 23v13M27 23v13" stroke="#333" strokeWidth="4" /></Ico></Tool>
      <CaretButton aria-label="Update options"><Caret /></CaretButton>
      <Tool aria-label="Run update" $before={16} $faded><Ico><path d="M4 15A15 15 0 0 1 31 11M33 21A15 15 0 0 1 5 25" /><path d="M35 8v9l-8-2zM2 26v-9l8 3z" fill="currentColor" stroke="none" /></Ico></Tool>
      <CaretButton aria-label="Run options" $faded><Caret /></CaretButton>
    </ToolGroup>
    <ToolGroup $start={20} $end={20}>
      <Tool aria-label="New worksheet"><Ico><path d="M20 31H1V2h29v17" /><Bars /><path d="M22 29h14M29 22v14" stroke="#333" strokeWidth="5" /></Ico></Tool>
      <CaretButton aria-label="New sheet options" $before={18}><Caret /></CaretButton>
      <Tool aria-label="Duplicate" $before={18}><Ico><path d="M10 2h25v20H10zM6 14H1v20h25v-8" /><path d="M17 18v-6M23 18V7M29 18v-8M8 30v-6M14 30v-5M20 30v-5" strokeWidth="3" /></Ico></Tool>
      <Tool aria-label="Clear sheet" $before={24}><Ico><path d="M20 31H1V2h29v17" /><Bars /><path d="M24 24l11 11M35 24L24 35" stroke="#222" strokeWidth="5" /></Ico></Tool>
      <CaretButton aria-label="Clear options" $before={18}><Caret /></CaretButton>
    </ToolGroup>
    <ToolGroup $start={24}>
      <Tool aria-label="Swap rows and columns"><Ico><path d="M1 2h8v7H1zM13 2h8v7h-8zM25 2h8v7h-8zM1 14h8v7H1zM1 26h8v7H1zM18 31q13 0 13-15" /><path d="M26 20l5-8 5 8zM23 25l-8 6 8 5z" fill="currentColor" stroke="none" /></Ico></Tool>
      <Tool aria-label="Sort ascending" $before={30}><Ico><path d="M4 4v24M13 4h9v7h-9zM13 15h15v7H13zM13 26h21v7H13z" /><path d="M0 26h8l-4 7z" fill="currentColor" stroke="none" /></Ico></Tool>
      <Tool aria-label="Sort descending" $before={28}><Ico><path d="M4 4v24M13 4h21v7H13zM13 15h15v7H13zM13 26h9v7h-9z" /><path d="M0 26h8l-4 7z" fill="currentColor" stroke="none" /></Ico></Tool>
    </ToolGroup>
    <ToolGroup $end={30}>
      <Tool aria-label="Highlight"><Ico><path d="M20 3l5 3-10 18-6 2v-6zM5 28l4 2" /><path d="M4 34h22" strokeWidth="3" /></Ico></Tool>
      <CaretButton aria-label="Highlight options" $before={10}><Caret /></CaretButton>
      <Tool aria-label="Group" $before={18} $faded><Ico><path d="M24 12L15 30q-3 5-7 2t-2-8L16 5q4-5 8-2t2 8L17 28q-2 3-4 1t0-5l7-13" /></Ico></Tool>
      <CaretButton aria-label="Group options" $before={12} $faded><Caret /></CaretButton>
      <LabelTool aria-label="Show mark labels"><Ico><path d="M2 4h32v28H2z" strokeWidth="3" /><path d="M12 13v-3h12v3M18 10v16M15 26h6" /></Ico></LabelTool>
      <Tool aria-label="Fix axes" $before={16}><Ico><path d="M18 4l12 12-4 1-6 7v6L5 15h6l6-6zM12 22L4 33" /></Ico></Tool>
      <FitBox>
        <FitSelect aria-label="Fit"><option>Entire View</option></FitSelect>
        <Caret />
      </FitBox>
    </ToolGroup>
    <ToolGroup>
      <Tool aria-label="Show cards"><Ico><path d="M0 4h7v6H0zM0 15h7v6H0zM0 26h7v6H0zM10 4h25v28H10z" /><path d="M17 28v-9M23 28V10M29 28V16" strokeWidth="3" /></Ico></Tool>
      <CaretButton aria-label="Card options" $before={10}><Caret /></CaretButton>
      <Tool aria-label="Presentation mode" $before={24}><Ico><path d="M5 8v14h26V8M18 22v10M12 33h12M18 0v4" /><path d="M1 6h34" strokeWidth="4" /></Ico></Tool>
    </ToolGroup>
    <ToolGroup $plain>
      <Tool aria-label="Share"><Ico><g stroke="#333"><circle cx="8" cy="18" r="5" /><circle cx="26" cy="8" r="5" /><circle cx="26" cy="28" r="5" /><path d="M12 15l9-5M12 21l9 5" /></g></Ico></Tool>
    </ToolGroup>
    <ToolSpacer />
    <ToolGroup $end={0} $plain>
      <Tool aria-label="Data guide"><Ico><path d="M2 5h28l5 7-5 7H2zM18 0v5M18 19v15M13 35h10" /></Ico></Tool>
    </ToolGroup>
    <ShowMeTab>
      <svg width="32" height="30" viewBox="0 0 32 30" aria-hidden="true"><Rects d={[[0, 0, 25, 6, "#84709a"], [0, 8, 32, 6, "#82a4cc"], [0, 16, 13, 6, "#f3a57e"], [0, 24, 19, 6, "#fa7083"]]} /></svg>
      Show Me
    </ShowMeTab>
  </Toolbar>
);

const Pane = () => (
  <Sidebar>
    <PaneTabs>
      <PaneTab $active>Dashboard</PaneTab>
      <PaneTab>Layout<svg width="12" height="20" viewBox="0 0 12 20" fill="none" stroke="#555" strokeWidth="2" aria-hidden="true"><path d="M11 1L2 10l9 9" /></svg></PaneTab>
    </PaneTabs>
    <DeviceSection>
      <Device>Default</Device>
      <Device $nested>Phone</Device>
      <OutlineButton>Device Preview</OutlineButton>
    </DeviceSection>
    <SizeSection>
      <Heading as="label" htmlFor="size">Size</Heading>
      <SizeField><PlainSelect id="size"><option>Automatic</option></PlainSelect><Caret size={14} /></SizeField>
    </SizeSection>
    <SheetsSection>
      <Heading>Sheets</Heading>
      <SheetRow>
        <svg width="34" height="34" viewBox="0 0 34 34" fill="none" stroke="#666" strokeWidth="2" aria-hidden="true"><path d="M16 26H1V2h24v14M9 20v-5M13 20V8M17 20V11" /><circle cx="24" cy="25" r="8" fill="#2f7f9f" stroke="none" /><path d="M20 25l3 3 5-6" stroke="#fff" /></svg>
        Sheet 1
      </SheetRow>
    </SheetsSection>
    <ObjectsSection>
      <ObjectsHeading>Objects</ObjectsHeading>
      <ObjectsArea>
        <ObjectList>
          {objects.map(([name, art]) => <ObjectItem key={name}><Ico s={24}>{art}</Ico>{name}</ObjectItem>)}
        </ObjectList>
        <ScrollTrack><ScrollThumb /></ScrollTrack>
      </ObjectsArea>
      <Segmented><Segment $on>Tiled</Segment><Segment>Floating</Segment></Segmented>
      <CheckLabel><CheckBox type="checkbox" />Show dashboard title</CheckLabel>
    </ObjectsSection>
  </Sidebar>
);

const MarkTooltip = () => (
  <Tooltip role="tooltip">
    <span>Description:</span><strong>RAPE</strong>
    <span>Year of Crime Date:</span><strong>2017</strong>
    <span>Count of Baltimore911.csv:</span><strong>362</strong>
  </Tooltip>
);

const Worksheet = () => (
  <Canvas>
    <Zone>
      <SheetTitle>Sheet 1</SheetTitle>
      <Grid>
        <colgroup><LabelCol />{[0, 1, 2, 3, 4, 5].map((i) => <col key={i} />)}</colgroup>
        <thead>
          <HeadRow><HeadCell /><HeadCell colSpan={6}>Year of Crime Date</HeadCell></HeadRow>
          <HeadRow><RowHead>Description</RowHead>{years.map((y) => <HeadCell key={y}>{y}</HeadCell>)}<HeadCell /></HeadRow>
        </thead>
        <GridBody>
          {crimes.map(([name, values, covered]) => (
            <tr key={name}>
              <RowHead scope="row">{name}</RowHead>
              {values.map((v, i) => {
                const selected = name === "RAPE" && i === 2;
                const blank = (covered && i === 5) || (name === "ROBBERY - CARJACKING" && i === 2);
                return (
                  <Cell key={i} $bg={heat(v)} $light={v > 5500} $selected={selected}>
                    {blank ? null : v.toLocaleString("en-US")}
                    {selected && <MarkTooltip />}
                  </Cell>
                );
              })}
            </tr>
          ))}
        </GridBody>
      </Grid>
      <ZoneControls>
        <button aria-label="Remove"><Ico s={22} w={3}><path d="M2 2l18 18M20 2L2 20" /></Ico></button>
        <button aria-label="Go to sheet"><Ico s={26}><path d="M13 7H2v17h18V14M10 16L22 3" /><path d="M14 1h11v11z" fill="currentColor" stroke="none" /></Ico></button>
        <button aria-label="More options"><Ico s={26} w={0}><path d="M6 9h14l-7 9z" fill="currentColor" /></Ico></button>
      </ZoneControls>
      <ZoneHandle aria-label="Move" />
    </Zone>
  </Canvas>
);

const ShowMe = () => (
  <ShowMePanel>
    <ThumbGrid>
      {thumbs.map((t) => (
        <Thumb key={t.name} aria-label={t.name} $on={t.on} $faded={t.faded}>
          <svg width="108" height="80" viewBox="0 0 108 80" aria-hidden="true">{t.art}</svg>
        </Thumb>
      ))}
    </ThumbGrid>
    <Hint>
      <HintLine $h={36}><span>For <b>lines</b> (discrete) try</span></HintLine>
      <HintLine $h={56}>1 date<CalendarIcon /></HintLine>
      <HintLine $h={40}>0 or more<Pill $color="#4996b4">Dimensions</Pill></HintLine>
      <HintLine $h={72}>1 or more<Pill $color="#00b180">Measures</Pill></HintLine>
    </Hint>
  </ShowMePanel>
);

const newTabs: [string, React.ReactNode][] = [
  ["New worksheet", <path d="M16 23H2V2h22v11M8 18v-4M13 18V8M18 14V10" />],
  ["New dashboard", <path d="M16 23H2V2h22v11M13 2v21M2 12h22" />],
  ["New story", <path d="M16 23l-3-1-11 2V2l11 3 11-3v11M13 5v16" />],
];

const App = () => (
  <Desktop>
    <Global />
    <Defs />
    <MenuBar aria-label="Menu bar">
      <AppleLogo />
      <MenuItem $bold>Tableau</MenuItem>
      {menus.map((m) => <MenuItem key={m}>{m}</MenuItem>)}
      <MenuExtras>
        <Ico s={34} w={0}><path d="M2 4l14-4v14H2zM18 0l14 4v7q-6-2-14 3zM2 17h14l-1 14Q3 26 2 17z" fill="currentColor" /><circle cx="23" cy="22" r="10" fill="currentColor" /><path d="M18 22l4 4 6-8" stroke="#5a2626" strokeWidth="3" /></Ico>
        <Ico s={34}><g stroke="#e8353f"><circle cx="17" cy="17" r="15" /><path d="M4 22q-1-16 13-16t12 18M8 27Q5 11 17 11t9 17M13 31Q9 17 18 16t5 14M17 32q0-10 3-10" /></g></Ico>
        <svg width="20" height="32" viewBox="0 0 20 32" fill="none" stroke="currentColor" strokeWidth="2" aria-hidden="true"><path d="M2 9v13q0 9 8 9t8-9V9q0-8-6-8T6 9v12q0 5 4 5t4-5V10" /></svg>
        <Battery>100%
          <svg width="52" height="26" viewBox="0 0 52 26" aria-hidden="true"><rect x="1" y="1" width="44" height="24" rx="7" fill="none" stroke="#b09a98" strokeWidth="2" /><rect x="4" y="4" width="38" height="18" rx="4" fill="#eee" /><path d="M48 9q4 4 0 8z" fill="#b09a98" /></svg>
        </Battery>
        <svg width="36" height="28" viewBox="0 0 36 28" fill="none" stroke="#eee" strokeWidth="5" aria-hidden="true"><path d="M2 10q16-14 32 0M9 17q9-8 18 0" /><path d="M13 22q5-4 10 0l-5 6z" fill="#eee" stroke="none" /></svg>
        <Ico s={28} w={3}><circle cx="12" cy="12" r="9" /><path d="M18 18l8 8" /></Ico>
        <svg width="48" height="30" viewBox="0 0 48 30" fill="none" stroke="#eee" strokeWidth="2" aria-hidden="true"><rect x="1" y="2" width="28" height="11" rx="6" /><circle cx="8" cy="7.500" r="4" fill="#eee" /><rect x="1" y="17" width="28" height="12" rx="6" fill="#eee" /><circle cx="23" cy="23" r="3" fill="#4b2224" stroke="none" /><circle cx="43" cy="16" r="5" fill="#d98a33" stroke="none" /></svg>
        <Clock><span>Tue Oct 3</span><span>10:27 PM</span></Clock>
      </MenuExtras>
    </MenuBar>
    <Window>
      <TitleBar>
        <Lights><Light $color="#ed6a5e" aria-label="Close" /><Light $color="#f5bf4f" aria-label="Minimize" /><Light $color="#61c554" aria-label="Zoom" /></Lights>
        <WindowTitle>
          <svg width="30" height="30" viewBox="0 0 28 28" aria-hidden="true"><rect width="28" height="28" fill="#fff" /><Pluses c={14} palette={["#4d8bbf"]} /></svg>
          Tableau - Book1
        </WindowTitle>
      </TitleBar>
      <AppToolbar />
      <Body>
        <Pane />
        <Worksheet />
        <ShowMe />
      </Body>
      <TabStrip aria-label="Sheets">
        <SheetTab $w={262}><Ico s={22}><path d="M3 4v14q0 3 8 3t8-3V4M3 4q0-3 8-3t8 3-8 3-8-3z" /></Ico>Data Source</SheetTab>
        <SheetTab $w={208} $on><Ico s={24}><path d="M1 1h22v22H1zM12 1v22M1 12h22" /></Ico>Dashboard 1</SheetTab>
        <SheetTab $w={116}>Sheet 1</SheetTab>
        {newTabs.map(([name, art]) => (
          <NewTab key={name} $w={64} aria-label={name}><Ico s={32}>{art}<path d="M17 23h14M24 16v14" strokeWidth="4" /></Ico></NewTab>
        ))}
      </TabStrip>
      <StatusBar>
        <StatusText>84 marks</StatusText><StatusText>14 rows by 6 columns</StatusText><StatusText>SUM of CNT(Baltimore911.csv): 218,964</StatusText>
        <StatusCell $w={254} /><StatusCell $w={54} /><StatusCell $w={54} /><StatusCell $w={94} />
        <StatusCell $w={141} $gap={16}>
          {[["First", "M3 1v14M13 1L5 8l8 7z"], ["Previous", "M12 1L4 8l8 7z"], ["Next", "M4 1l8 7-8 7z"], ["Last", "M13 1v14M3 1l8 7-8 7z"]].map(([n, d]) => (
            <GlyphButton key={n} aria-label={n}><svg width="16" height="16" viewBox="0 0 16 16" fill="currentColor" stroke="currentColor" strokeWidth="1" aria-hidden="true"><path d={d} /></svg></GlyphButton>
          ))}
        </StatusCell>
        <StatusCell $w={154} $gap={20}>
          <GlyphButton aria-label="Sheet sorter"><svg width="22" height="22" viewBox="0 0 22 22" aria-hidden="true"><path d="M0 3h22M0 11h22M0 19h22" stroke="currentColor" strokeWidth="6" strokeDasharray="6 2" /></svg></GlyphButton>
          <GlyphButton aria-label="Filmstrip"><svg width="22" height="22" viewBox="0 0 22 22" aria-hidden="true"><path d="M0 0h22v14H0z" fill="currentColor" /><path d="M0 19h22" stroke="currentColor" strokeWidth="6" strokeDasharray="6 2" /></svg></GlyphButton>
          <GlyphButton $dark aria-label="Tabs"><svg width="22" height="22" viewBox="0 0 22 22" aria-hidden="true"><rect width="22" height="22" rx="1" fill="currentColor" /></svg></GlyphButton>
        </StatusCell>
      </StatusBar>
    </Window>
    <DockArea>
      <DockBar aria-label="Dock">
        <DockItem aria-label="Finder" $running><Finder /></DockItem>
        <DockItem aria-label="Launchpad"><Launchpad /></DockItem>
        <DockItem aria-label="Maps"><Maps /></DockItem>
        <DockItem aria-label="Photos"><Photos /></DockItem>
        <DockItem aria-label="FaceTime"><FaceTime /></DockItem>
        <DockItem aria-label="Calendar"><CalendarApp /></DockItem>
        <DockItem aria-label="Reminders"><Reminders /></DockItem>
        <DockItem aria-label="App Store"><AppStore /></DockItem>
        <DockItem aria-label="System Settings"><Settings /></DockItem>
        <DockItem aria-label="Visual Studio Code" $running><VSCode /></DockItem>
        <DockItem aria-label="Preview"><Preview /></DockItem>
        <DockItem aria-label="Terminal"><Terminal /></DockItem>
        <DockRule />
        <DockItem aria-label="Google Chrome" $running><Chrome /></DockItem>
        <DockItem aria-label="Tableau" $running><TableauApp /></DockItem>
        <DockItem aria-label="Tableau Prep"><TableauApp /></DockItem>
        <DockRule />
        <DockItem aria-label="Screen sharing window"><SharingMini /></DockItem>
        <DockItem aria-label="Finder window"><FinderMini /></DockItem>
        <DockItem aria-label="Trash"><Trash /></DockItem>
      </DockBar>
    </DockArea>
  </Desktop>
);

export default App;
